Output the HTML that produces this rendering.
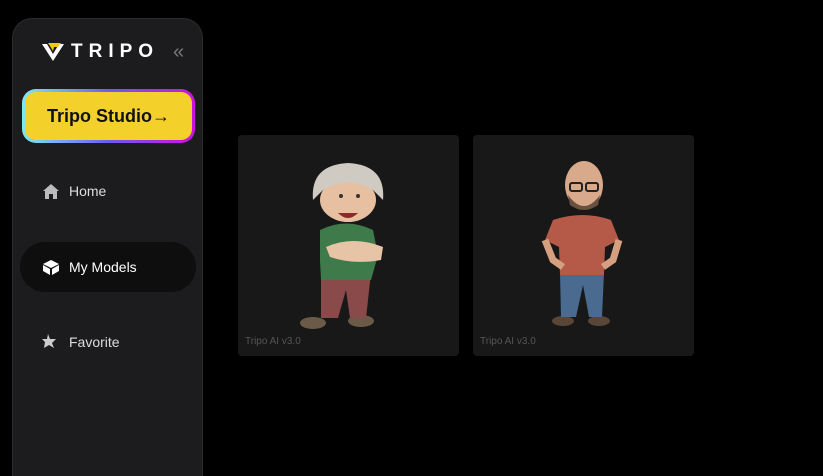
<!DOCTYPE html>
<html><head><style>
*{margin:0;padding:0;box-sizing:border-box}
html,body{width:823px;height:476px;overflow:hidden}
body{background:#000;font-family:"Liberation Sans",sans-serif;position:relative}
.side{position:absolute;left:12px;top:18px;width:191px;height:458px;background:#1c1c1e;border:1px solid #2c2c2e;border-bottom:none;border-radius:20px 20px 0 0}
.logo{position:absolute;left:28px;top:22px;display:flex;align-items:center;gap:6px;color:#fff;font-weight:bold;font-size:19px;letter-spacing:6px}
.chev{position:absolute;left:160px;top:22px;color:#777;font-size:20px}
.btn{position:absolute;left:9px;top:70px;width:173px;height:54px;border-radius:14px;padding:3px;background:linear-gradient(90deg,#7fe8f0,#6b5cf0 50%,#d010e0)}
.btn div{width:100%;height:100%;background:#f4d02a;border-radius:11px;display:flex;align-items:center;justify-content:center;font-weight:bold;font-size:18px;color:#111}
.item{position:absolute;left:7px;width:176px;height:50px;border-radius:25px;display:flex;align-items:center;padding-left:22px;gap:9px;color:#ddd;font-size:14px}
.item.act{background:#0e0e0f;color:#fff}
.card{position:absolute;top:135px;width:221px;height:221px;background:#181818;border-radius:4px}
.card span{position:absolute;left:7px;bottom:9px;color:#555;font-size:10px}
.card svg{position:absolute;left:0;top:0}
</style></head><body>
<div class="side">
 <div class="logo"><svg width="24" height="22" viewBox="0 0 24 22"><path d="M1 3 L12 20 L23 3 L18 3 L12 13 L6 3Z" fill="#fff"/><path d="M7 2 H20 L17 6 H13 L12 10 L9 5Z" fill="#f4c81a"/></svg>TRIPO</div>
 <div class="chev">«</div>
 <div class="btn"><div>Tripo Studio→</div></div>
 <div class="item" style="top:147px"><svg width="18" height="16" viewBox="0 0 18 16"><path d="M9 1 L17 8 H15 V16 H3 V8 H1Z" fill="#bbb"/><rect x="7" y="11" width="4" height="5" fill="#1c1c1e"/></svg>Home</div>
 <div class="item act" style="top:223px"><svg width="18" height="16" viewBox="0 0 18 16"><path d="M9 1 L17 5 L9 9 L1 5Z" fill="#fff"/><path d="M1 6 L8 10 V16 L1 12Z M17 6 L10 10 V16 L17 12Z" fill="#fff"/></svg>My Models</div>
 <div class="item" style="top:298px"><svg width="18" height="18" viewBox="0 0 18 18"><path d="M6 1 L8 6 L14 6 L10 10 L12 15 L7 12 L2 15 L3 9 L0 6 L5 6Z" fill="#ccc"/></svg>Favorite</div>
</div>
<div class="card" style="left:238px"><svg width="221" height="221">
 <ellipse cx="75" cy="188" rx="13" ry="6" fill="#6b5a48"/><ellipse cx="123" cy="186" rx="13" ry="6" fill="#6b5a48"/>
 <path d="M83 138 H133 L128 183 H112 L108 155 L100 183 H83Z" fill="#8a4a4a"/>
 <path d="M82 95 Q108 82 135 95 L140 120 L133 145 H83 L82 125Z" fill="#3f7a4a"/>
 <path d="M88 112 Q115 100 145 112 L143 125 Q115 130 92 122Z" fill="#e8c4a6"/>
 <ellipse cx="110" cy="65" rx="28" ry="22" fill="#e6c0a0"/>
 <path d="M75 65 Q72 30 110 28 Q148 30 145 65 L135 55 Q110 40 85 55Z" fill="#cfcac2"/>
 <path d="M100 78 Q110 88 120 78Z" fill="#8a2a2a"/>
 <circle cx="103" cy="61" r="2" fill="#333"/><circle cx="120" cy="61" r="2" fill="#333"/>
</svg><span>Tripo AI v3.0</span></div>
<div class="card" style="left:473px"><svg width="221" height="221">
 <ellipse cx="90" cy="186" rx="11" ry="5" fill="#5a4636"/><ellipse cx="126" cy="186" rx="11" ry="5" fill="#5a4636"/>
 <path d="M87 138 H131 L129 182 H116 L110 150 L103 182 H88Z" fill="#4a6a90"/>
 <path d="M80 85 Q110 75 138 85 L146 105 L132 112 L131 140 H87 L86 112 L72 105Z" fill="#b55a48"/>
 <path d="M72 105 L80 125 L90 132 M146 105 L140 125 L130 132" stroke="#d4a080" stroke-width="7" fill="none"/>
 <ellipse cx="111" cy="50" rx="19" ry="24" fill="#d8a98a"/>
 <path d="M95 60 Q111 82 127 60 L125 70 Q111 80 97 70Z" fill="#6a5040"/>
 <rect x="97" y="48" width="12" height="8" rx="2" fill="none" stroke="#222" stroke-width="2"/><rect x="113" y="48" width="12" height="8" rx="2" fill="none" stroke="#222" stroke-width="2"/>
</svg><span>Tripo AI v3.0</span></div>
</body></html>
